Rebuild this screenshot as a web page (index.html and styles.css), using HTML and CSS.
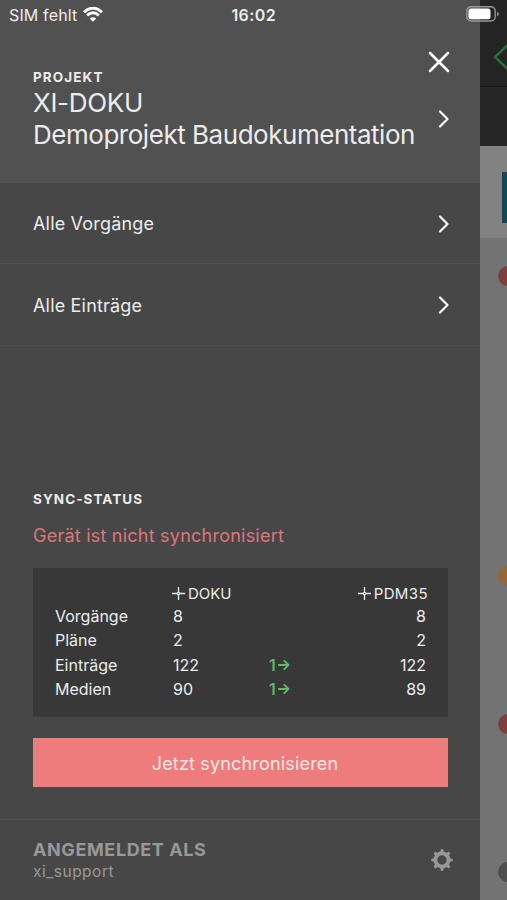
FILE: index.html
```html
<!DOCTYPE html>
<html lang="de">
<head>
<meta charset="utf-8">
<title>XI-DOKU</title>
<link rel="stylesheet" href="styles.css">
</head>
<body>
<div class="screen">
  <aside class="drawer">
    <header class="project">
      <div class="project-text">
        <h2 class="label project-label">PROJEKT</h2>
        <div class="project-name"><span class="code">XI-DOKU</span></div>
        <div class="project-name"><span class="title">Demoprojekt Baudokumentation</span></div>
      </div>
      <div class="project-actions">
        <svg class="close" width="22" height="22" viewBox="0 0 22 22"><path d="M2 2 20 20M20 2 2 20"/></svg>
        <svg class="chevron" width="12" height="18" viewBox="0 0 12 18"><path d="M2 1.5 9.5 9 2 16.5"/></svg>
      </div>
    </header>
    <nav class="menu">
      <a class="menu-item"><span>Alle Vorgänge</span>
        <svg class="chevron" width="12" height="18" viewBox="0 0 12 18"><path d="M2 1.5 9.5 9 2 16.5"/></svg></a>
      <a class="menu-item"><span>Alle Einträge</span>
        <svg class="chevron" width="12" height="18" viewBox="0 0 12 18"><path d="M2 1.5 9.5 9 2 16.5"/></svg></a>
    </nav>
    <section class="sync">
      <h2 class="label sync-label">SYNC-STATUS</h2>
      <p class="message">Gerät ist nicht synchronisiert</p>
      <div class="stats">
        <div class="row head">
          <span></span>
          <span class="brand doku"><svg width="13" height="13" viewBox="0 0 13 13"><path d="M6.5 0V5M6.5 8V13M0 6.5H5M8 6.5H13M5 6.5 6.5 5 8 6.5 6.5 8Z"/></svg>DOKU</span>
          <span></span>
          <span class="brand pdm"><svg width="13" height="13" viewBox="0 0 13 13"><path d="M6.5 0V5M6.5 8V13M0 6.5H5M8 6.5H13M5 6.5 6.5 5 8 6.5 6.5 8Z"/></svg>PDM35</span>
        </div>
        <div class="row"><span>Vorgänge</span><span>8</span><span></span><span class="num">8</span></div>
        <div class="row"><span>Pläne</span><span>2</span><span></span><span class="num">2</span></div>
        <div class="row"><span>Einträge</span><span>122</span><span class="delta">1<svg width="12" height="12" viewBox="0 0 12 12"><path d="M.5 6H10.5M6.3 1.8 10.5 6 6.3 10.2"/></svg></span><span class="num">122</span></div>
        <div class="row"><span>Medien</span><span>90</span><span class="delta">1<svg width="12" height="12" viewBox="0 0 12 12"><path d="M.5 6H10.5M6.3 1.8 10.5 6 6.3 10.2"/></svg></span><span class="num">89</span></div>
      </div>
      <button class="sync-button"><span>Jetzt synchronisieren</span></button>
    </section>
    <footer class="account">
      <div>
        <div class="account-label">ANGEMELDET ALS</div>
        <div class="account-name">xi_support</div>
      </div>
      <svg class="gear" width="22" height="22" viewBox="-11 -11 22 22">
        <circle r="6.6" class="ring"/>
        <path class="teeth" d="M0-8V-9.3M0 8V9.3M-8 0H-9.3M8 0H9.3M-5.6-5.6-6.5-6.5M5.6-5.6 6.5-6.5M-5.6 5.6-6.5 6.5M5.6 5.6 6.5 6.5"/>
      </svg>
    </footer>
  </aside>
  <main class="behind">
    <div class="topbar"><svg width="14" height="26" viewBox="0 0 14 26"><path d="M14 1.5 2 13 14 24.5"/></svg></div>
    <div class="toolbar"></div>
    <div class="banner"><div class="thumb"></div></div>
    <div class="pins">
      <i class="pin red p1"></i>
      <i class="pin orange p2"></i>
      <i class="pin red p3"></i>
      <i class="pin gray p4"></i>
    </div>
  </main>
  <div class="statusbar">
    <span class="carrier">SIM fehlt</span>
    <svg class="wifi" width="20" height="15" viewBox="0 0 20 15"><path d="M1 5.2Q10-3 19 5.2M4.1 8.4Q10 3.2 15.9 8.4"/><path class="dot" d="M10 14.7 6.8 11.5Q10 8.8 13.2 11.5Z"/></svg>
    <span class="clock">16:02</span>
    <svg class="battery" width="33" height="16" viewBox="0 0 33 16"><rect class="shell" x=".8" y=".8" width="28.4" height="14.2" rx="4.3"/><rect class="charge" x="2.5" y="2.5" width="22" height="10.8" rx="2.5"/><path class="cap" d="M31 5.5Q33 6.5 33 8T31 10.5Z"/></svg>
  </div>
</div>
</body>
</html>
```

FILE: styles.css
```css
* { box-sizing: border-box; margin: 0; padding: 0; }
body { width: 507px; height: 900px; overflow: hidden; background: #474747; color: #ececec; font-family: Inter, "Liberation Sans", sans-serif; }
svg { display: block; flex: none; fill: none; stroke: currentColor; stroke-linecap: round; stroke-linejoin: round; }
span { white-space: nowrap; }
.screen { position: relative; display: grid; grid-template-columns: 480px 27px; height: 900px; }
.drawer { display: flex; flex-direction: column; background: #474747; }
.label { font-size: 13.5px; line-height: 16px; font-weight: 700; letter-spacing: 1.1px; }
.project { display: flex; justify-content: space-between; height: 183px; padding: 69px 30px 0 33px; background: #515151; }
.project-name { font-size: 26px; line-height: 32px; white-space: nowrap; }
.project-label + .project-name { margin-top: 2px; }
.code { letter-spacing: -.3px; }
.title { letter-spacing: -.47px; }
.project-actions { display: flex; flex-direction: column; align-items: flex-end; margin-top: -18px; gap: 37px; }
.close { stroke-width: 2.5; color: #fff; }
.chevron { stroke-width: 2.2; color: #f5f5f5; }
.menu-item { display: flex; align-items: center; justify-content: space-between; height: 81px; padding: 1px 30px 0 33px; font-size: 18px; letter-spacing: .18px; border-bottom: 1px solid #535353; }
.menu-item + .menu-item { height: 82px; border-color: #4c4c4c; }
.sync { margin-top: auto; padding: 0 32px 32px 33px; }
.sync-label { letter-spacing: 1.05px; }
.message { margin-top: 17px; font-size: 18px; line-height: 24px; letter-spacing: .23px; color: #dd7679; white-space: nowrap; }
.stats { margin-top: 20px; height: 149px; padding: 14px 22px 0; background: #383838; font-size: 16px; }
.row { display: grid; grid-template-columns: 118px 96px 50px 1fr; align-items: center; height: 24.3px; }
.row.head { height: 22px; }
.num { text-align: right; }
.brand { display: flex; align-items: center; gap: 3px; font-size: 15px; margin-left: -1px; }
.brand svg { stroke-width: 1.3; stroke-linecap: butt; }
.pdm { justify-content: flex-end; margin-right: -2px; letter-spacing: .4px; }
.delta { display: flex; align-items: center; gap: 2px; color: #5bb865; font-weight: 600; }
.delta svg { stroke-width: 1.8; }
.sync-button { display: block; width: 415px; height: 49px; margin-top: 21px; padding: 1px 0 0 9px; border: 0; background: #ef7c7c; color: #ffe9e4; font: 18px Inter, "Liberation Sans", sans-serif; letter-spacing: .17px; }
.account { display: flex; justify-content: space-between; height: 81px; padding: 18px 27px 0 33px; border-top: 1px solid #535353; color: #989898; }
.account-label { font-size: 18px; line-height: 23px; font-weight: 700; letter-spacing: .6px; }
.account-name { font-size: 15.5px; line-height: 21px; letter-spacing: .5px; }
.gear { margin-top: 11px; }
.ring { stroke-width: 3.8; }
.teeth { stroke-width: 3.2; }
.behind { display: flex; flex-direction: column; overflow: hidden; background: #737373; }
.topbar { height: 87px; padding: 44px 0 0 13px; background: #242424; color: #257535; border-bottom: 1px solid #1b1b1b; }
.topbar svg { stroke-width: 2.4; }
.toolbar { height: 59px; background: #262626; }
.banner { height: 92px; padding-top: 26px; background: #828282; }
.thumb { height: 51px; margin-left: 22px; background: #174653; }
.pins { position: relative; flex: 1; }
.pin { position: absolute; left: 18px; width: 20px; height: 20px; border-radius: 50%; }
.red { background: #7b3f3c; }
.orange { background: #94683a; }
.gray { background: #4e4e4e; }
.p1 { top: 28px; } .p2 { top: 328px; } .p3 { top: 476px; } .p4 { top: 624px; }
.statusbar { position: absolute; inset: 0 0 auto; height: 29px; display: flex; align-items: center; padding: 0 8px 0 9px; font-size: 16px; }
.carrier { letter-spacing: .15px; }
.wifi { margin-left: 6px; color: #fff; stroke-width: 2.9; stroke-linecap: butt; }
.dot { fill: #fff; stroke: none; }
.clock { margin-left: 128px; font-weight: 600; letter-spacing: .4px; }
.battery { margin: -1px 0 0 auto; }
.shell { stroke: #989898; stroke-width: 1.4; }
.charge { fill: #fff; stroke: none; }
.cap { fill: #858585; stroke: none; }
```
